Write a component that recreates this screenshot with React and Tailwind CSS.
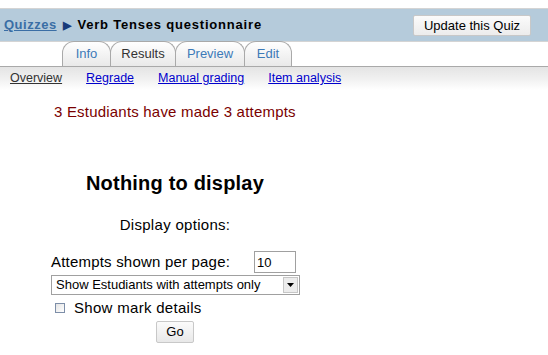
import React from "react";

const tabs = [
  { label: "Info", active: false, w: "w-[49px]" },
  { label: "Results", active: true, w: "w-[66px]" },
  { label: "Preview", active: false, w: "w-[70px]" },
  { label: "Edit", active: false, w: "w-[48px]" },
];

const subLinks = ["Regrade", "Manual grading", "Item analysis"];

export default function App() {
  return (
    <div className="w-[548px] h-[355px] bg-white overflow-hidden pt-[8px] font-['Liberation_Sans',Arial,sans-serif] text-[14px] text-black">
      {/* Header bar */}
      <div className="h-[34px] bg-[#b5cbdb] border-t border-b border-[#d4d4d4] flex items-center justify-between pl-[4px] pr-[17px]">
        <div className="flex items-center font-bold text-[13px] tracking-[0.8px]">
          <a href="#" className="text-[#3a6ea5] underline tracking-[0.5px]">Quizzes</a>
          <span className="mx-[6px] text-[#173a7a] text-[11px]">▶</span>
          <span>Verb Tenses questionnaire</span>
        </div>
        <button className="h-[21px] w-[118px] bg-gradient-to-b from-[#fbfbfb] to-[#ececec] border border-[#c8c8c8] rounded-[2px] text-[13px] text-black">
          Update this Quiz
        </button>
      </div>

      {/* Tabs */}
      <div className="h-[25px] flex items-end pl-[62px] border-b border-[#a9a9a9]">
        {tabs.map(t => (
          <div
            key={t.label}
            className={`${t.w} h-[25px] -mr-[1px] flex items-center justify-center rounded-t-[12px] border border-b-0 border-[#a9a9a9] bg-gradient-to-b from-white to-[#e9e9e9] text-[13px] ${t.active ? "text-[#333]" : "text-[#3d7ab8]"}`}
          >
            {t.label}
          </div>
        ))}
      </div>

      {/* Sub navigation */}
      <div className="h-[23px] flex items-center gap-[24px] pl-[10px] bg-gradient-to-b from-[#e4e4e4] via-[#f0f0f0] to-white text-[12.5px]">
        <a href="#" className="text-[#333] underline">Overview</a>
        {subLinks.map(l => (
          <a key={l} href="#" className="text-[#0000cc] underline">{l}</a>
        ))}
      </div>

      {/* Content */}
      <div className="pl-[54px] pt-[13px] leading-[18px] text-[#7a0000] text-[15px] tracking-[0.2px]">
        3 Estudiants have made 3 attempts
      </div>

      <div className="w-[350px] flex flex-col items-center">
        <h2 className="mt-[50px] leading-[24px] text-[20px] font-bold tracking-[0.2px]">Nothing to display</h2>
        <div className="mt-[21px] leading-[18px] text-[15px] tracking-[0.3px]">Display options:</div>
      </div>

      <div className="pl-[51px] mt-[17px] flex flex-col">
        <div className="flex items-center h-[22px]">
          <span className="text-[15px] tracking-[0.2px]">Attempts shown per page:</span>
          <input
            defaultValue="10"
            className="ml-[24px] w-[42px] h-[22px] border border-[#a0a0a0] px-[2px] text-[13px] outline-none"
          />
        </div>
        <div className="mt-[2px] w-[249px] h-[20px] border border-[#a0a0a0] flex items-center justify-between pl-[4px] pr-[1px] text-[13px]">
          <span>Show Estudiants with attempts only</span>
          <span className="w-[15px] h-[16px] bg-[#ececec] border border-[#c6c6c6] flex items-center justify-center">
            <svg width="7" height="4" viewBox="0 0 7 4"><path d="M0 0h7L3.5 4z" fill="#000" /></svg>
          </span>
        </div>
        <label className="mt-[4px] ml-[4px] h-[18px] flex items-center text-[15px] tracking-[0.3px]">
          <span className="w-[10px] h-[10px] border border-[#7d8ea8] bg-gradient-to-br from-[#e4e4e4] to-white" />
          <span className="ml-[9px]">Show mark details</span>
        </label>
        <div className="mt-[4px] ml-[105px]">
          <button className="w-[38px] h-[22px] bg-gradient-to-b from-[#fbfbfb] to-[#e8e8e8] border border-[#c8c8c8] rounded-[2px] text-[13px]">
            Go
          </button>
        </div>
      </div>
    </div>
  );
}
